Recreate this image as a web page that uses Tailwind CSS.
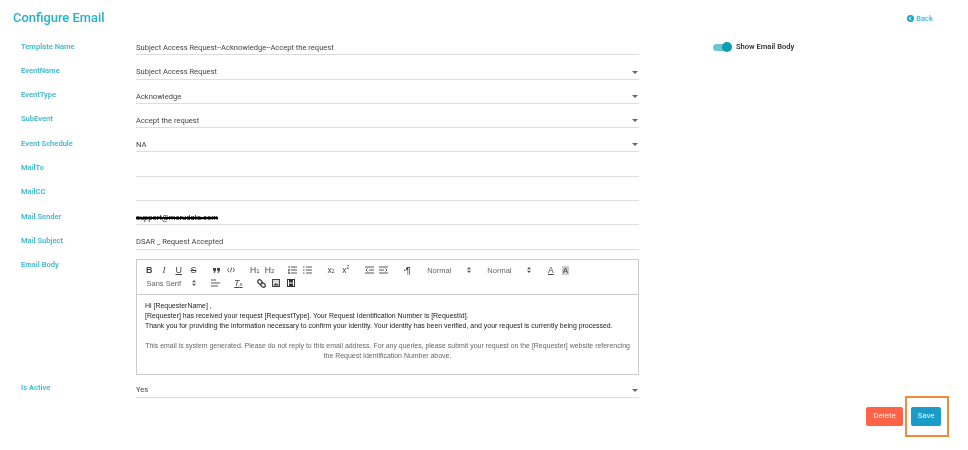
<!DOCTYPE html>
<html lang="en">
<head>
  <meta charset="UTF-8" />
  <title>Configure Email</title>
  <script src="https://cdn.jsdelivr.net/npm/@tailwindcss/browser@4"></script>
</head>
<body class="bg-white w-[968px] h-[450px] overflow-hidden relative blur-[0.25px] font-['Roboto',sans-serif] text-[7.55px] text-[#444]">
  <!-- Header -->
  <header class="flex justify-between items-center h-[31px] pt-[5px] pl-[13px] pr-[35px]">
    <h1 class="text-[12.9px] font-medium text-[#22b3c8]">Configure Email</h1>
    <a class="flex items-center gap-[2px] text-[#3fb9cf] font-medium pt-[1px]">
      <svg width="7" height="7" viewBox="0 0 10 10"><circle cx="5" cy="5" r="5" fill="#17a5c6"/><path d="M5.800 2.600 3.400 5l2.400 2.400" fill="none" stroke="#fff" stroke-width="1.500"/></svg>
      Back
    </a>
  </header>

  <main class="flex">
    <!-- Form -->
    <div class="w-[639px] pl-[21px]">
      <div class="flex h-[24.3px]">
        <label class="w-[115px] pt-[9.5px] font-semibold text-[#3fb9cf]">Template Name</label>
        <div class="flex-1 border-b border-[#ddd] flex items-end pb-[1px]">Subject Access Request--Acknowledge--Accept the request</div>
      </div>
      <div class="flex h-[24.3px]">
        <label class="w-[115px] pt-[9.5px] font-semibold text-[#3fb9cf]">EventName</label>
        <div class="flex-1 border-b border-[#ddd] flex items-end justify-between pb-[1px] pr-[1px]">Subject Access Request
          <svg class="mb-[4px]" width="6" height="3" viewBox="0 0 6 3"><path d="M0 0h6L3 3z" fill="#666"/></svg></div>
      </div>
      <div class="flex h-[24.3px]">
        <label class="w-[115px] pt-[9.5px] font-semibold text-[#3fb9cf]">EventType</label>
        <div class="flex-1 border-b border-[#ddd] flex items-end justify-between pb-[1px] pr-[1px]">Acknowledge
          <svg class="mb-[4px]" width="6" height="3" viewBox="0 0 6 3"><path d="M0 0h6L3 3z" fill="#666"/></svg></div>
      </div>
      <div class="flex h-[24.3px]">
        <label class="w-[115px] pt-[9.5px] font-semibold text-[#3fb9cf]">SubEvent</label>
        <div class="flex-1 border-b border-[#ddd] flex items-end justify-between pb-[1px] pr-[1px]">Accept the request
          <svg class="mb-[4px]" width="6" height="3" viewBox="0 0 6 3"><path d="M0 0h6L3 3z" fill="#666"/></svg></div>
      </div>
      <div class="flex h-[24.3px]">
        <label class="w-[115px] pt-[9.5px] font-semibold text-[#3fb9cf]">Event Schedule</label>
        <div class="flex-1 border-b border-[#ddd] flex items-end justify-between pb-[1px] pr-[1px]">NA
          <svg class="mb-[4px]" width="6" height="3" viewBox="0 0 6 3"><path d="M0 0h6L3 3z" fill="#666"/></svg></div>
      </div>
      <div class="flex h-[24.3px]">
        <label class="w-[115px] pt-[9.5px] font-semibold text-[#3fb9cf]">MailTo</label>
        <div class="flex-1 border-b border-[#ddd]"></div>
      </div>
      <div class="flex h-[24.3px]">
        <label class="w-[115px] pt-[9.5px] font-semibold text-[#3fb9cf]">MailCC</label>
        <div class="flex-1 border-b border-[#ddd]"></div>
      </div>
      <div class="flex h-[24.3px]">
        <label class="w-[115px] pt-[9.5px] font-semibold text-[#3fb9cf]">Mail Sender</label>
        <div class="flex-1 border-b border-[#ddd] flex items-end pb-[1px] text-black line-through decoration-2 decoration-black">support@merudata.com</div>
      </div>
      <div class="flex h-[24.3px]">
        <label class="w-[115px] pt-[9.5px] font-semibold text-[#3fb9cf]">Mail Subject</label>
        <div class="flex-1 border-b border-[#ddd] flex items-end pb-[1px]">DSAR _ Request Accepted</div>
      </div>

      <!-- Email body editor -->
      <div class="flex mt-[9px]">
        <label class="w-[115px] font-semibold text-[#3fb9cf]">Email Body</label>
        <div class="flex-1 border border-[#ccc] h-[116px] flex flex-col">
          <div class="flex flex-wrap items-center gap-x-[8.7px] px-[5px] py-[4px] h-[35px] border-b border-[#ccc] content-start text-[#444] font-['Liberation_Sans',sans-serif]">
            <div class="flex">
              <button class="w-[14.7px] h-[13px] text-[9px] font-bold">B</button>
              <button class="w-[14.7px] h-[13px] text-[9px] italic font-['Liberation_Serif',serif]">I</button>
              <button class="w-[14.7px] h-[13px] text-[9px] underline">U</button>
              <button class="w-[14.7px] h-[13px] text-[9px] line-through">S</button>
            </div>
            <div class="flex">
              <button class="w-[14.7px] h-[13px] flex items-center justify-center">
                <svg width="7" height="5" viewBox="0 0 7 5" fill="#444"><path d="M0 0h3v2.500L1.500 5H.5l1-2.200H0zM4 0h3v2.500L5.500 5h-1l1-2.200H4z"/></svg>
              </button>
              <button class="w-[14.7px] h-[13px] flex items-center justify-center">
                <svg width="8" height="6" viewBox="0 0 8 6" fill="none" stroke="#444" stroke-width=".8"><path d="M2 1 .5 3 2 5M6 1l1.500 2L6 5M4.700.5 3.300 5.500"/></svg>
              </button>
            </div>
            <div class="flex">
              <button class="w-[14.7px] h-[13px] text-[8.5px] font-medium">H<span class="text-[6px]">1</span></button>
              <button class="w-[14.7px] h-[13px] text-[8.5px] font-medium">H<span class="text-[6px]">2</span></button>
            </div>
            <div class="flex">
              <button class="w-[14.7px] h-[13px] flex items-center justify-center">
                <svg width="9" height="8" viewBox="0 0 9 8" stroke="#444" stroke-width=".9" fill="none"><path d="M3 1h6M3 4h6M3 7h6M1 0v2M.3 3.500h1.400L.3 5h1.400M.3 6.500h1.400v1H.3"/></svg>
              </button>
              <button class="w-[14.7px] h-[13px] flex items-center justify-center">
                <svg width="9" height="8" viewBox="0 0 9 8" stroke="#444" stroke-width=".9"><path d="M3 1h6M3 4h6M3 7h6M0 1h1.500M0 4h1.500M0 7h1.500"/></svg>
              </button>
            </div>
            <div class="flex">
              <button class="w-[14.7px] h-[13px] text-[8.5px]">x<span class="text-[5px]">2</span></button>
              <button class="w-[14.7px] h-[13px] text-[8.5px]">x<span class="text-[5px] align-super">2</span></button>
            </div>
            <div class="flex">
              <button class="w-[14.7px] h-[13px] flex items-center justify-center">
                <svg width="9" height="8" viewBox="0 0 9 8" stroke="#444" stroke-width=".9" fill="none"><path d="M0 1h9M4 4h5M0 7h9"/><path d="M2.500 2.500 1 4l1.500 1.500"/></svg>
              </button>
              <button class="w-[14.7px] h-[13px] flex items-center justify-center">
                <svg width="9" height="8" viewBox="0 0 9 8" stroke="#444" stroke-width=".9" fill="none"><path d="M0 1h9M0 4h5M0 7h9"/><path d="M6.500 2.500 8 4 6.500 5.500"/></svg>
              </button>
            </div>
            <div class="flex">
              <button class="w-[14.7px] h-[13px] text-[8.5px] font-bold">
                <span class="text-[6px] align-middle">•</span>¶
              </button>
            </div>
            <div class="flex w-[51.5px] h-[13px] items-center justify-between pl-[4px] pr-[4px] text-[7.5px] text-[#666]">
              Normal
              <svg width="4" height="6" viewBox="0 0 4 6" fill="#555"><path d="M0 2.300 2 0l2 2.300zM0 3.700h4L2 6z"/></svg>
            </div>
            <div class="flex w-[51.5px] h-[13px] items-center justify-between pl-[4px] pr-[4px] text-[7.5px] text-[#666]">
              Normal
              <svg width="4" height="6" viewBox="0 0 4 6" fill="#555"><path d="M0 2.300 2 0l2 2.300zM0 3.700h4L2 6z"/></svg>
            </div>
            <div class="flex">
              <button class="w-[14.7px] h-[13px] text-[8.5px] underline">A</button>
              <button class="w-[14.7px] h-[13px] text-[8px] flex items-center justify-center"><span class="bg-[#ccc] px-[1px] leading-[9px]">A</span></button>
            </div>
            <div class="flex w-[57px] h-[13px] items-center justify-between pl-[4.5px] pr-[3px] text-[7.5px] text-[#666]">
              Sans Serif
              <svg width="4" height="6" viewBox="0 0 4 6" fill="#555"><path d="M0 2.300 2 0l2 2.300zM0 3.700h4L2 6z"/></svg>
            </div>
            <div class="flex">
              <button class="w-[14.7px] h-[13px] flex items-center justify-center">
                <svg width="9" height="8" viewBox="0 0 9 8" stroke="#444" stroke-width=".9"><path d="M0 1h5M0 4h9M0 7h7"/></svg>
              </button>
            </div>
            <div class="flex">
              <button class="w-[14.7px] h-[13px] text-[8.5px] italic font-medium underline">T<span class="text-[6px]">x</span></button>
            </div>
            <div class="flex">
              <button class="w-[14.7px] h-[13px] flex items-center justify-center">
                <svg width="9" height="9" viewBox="0 0 9 9" fill="none" stroke="#444" stroke-width="1.300"><path d="M1 3.500a1.800 1.800 0 0 1 2.500-2.500l1.500 1.500a1.800 1.800 0 0 1-2.500 2.500zM4 6.500a1.800 1.800 0 0 1 2.500-2.500L8 5.500a1.800 1.800 0 0 1-2.500 2.500z"/></svg>
              </button>
              <button class="w-[14.7px] h-[13px] flex items-center justify-center">
                <svg width="8" height="8" viewBox="0 0 8 8"><rect x=".5" y=".5" width="7" height="7" fill="#ddd" stroke="#444"/><path d="M1.500 6.500 3.500 4l1.500 1.500 1-1 .5 2z" fill="#444"/></svg>
              </button>
              <button class="w-[14.7px] h-[13px] flex items-center justify-center">
                <svg width="8" height="8" viewBox="0 0 8 8"><rect x=".5" y=".5" width="7" height="7" fill="#fff" stroke="#333"/><path d="M2 0h4v3.500H2zM2 4.500h4V8H2z" fill="#333"/></svg>
              </button>
            </div>
          </div>
          <div class="flex-1 px-[8px] pt-[6px] text-[6.95px] leading-[10.2px] text-[#222] font-['Liberation_Sans',sans-serif]">
            <p>Hi [RequesterName] ,</p>
            <p>[Requester] has received your request [RequestType]. Your Request Identification Number is [RequestId].</p>
            <p>Thank you for providing the information necessary to confirm your identity. Your identity has been verified, and your request is currently being processed.</p>
            <p class="text-center text-[#666] mt-[9.5px]">This email is system generated. Please do not reply to this email address. For any queries, please submit your request on the [Requester] website referencing the Request Identification Number above.</p>
          </div>
        </div>
      </div>

      <div class="flex h-[23px]">
        <label class="w-[115px] pt-[7.5px] font-semibold text-[#3fb9cf]">Is Active</label>
        <div class="flex-1 border-b border-[#ddd] flex items-end justify-between pb-[1px] pr-[1px]">Yes
          <svg class="mb-[4px]" width="6" height="3" viewBox="0 0 6 3"><path d="M0 0h6L3 3z" fill="#666"/></svg></div>
      </div>
    </div>

    <!-- Toggle -->
    <div class="pl-[74px] pt-[11px] flex items-start gap-[4px]">
      <div class="relative w-[19px] h-[10px]">
        <div class="absolute left-0 right-[2px] top-[1.5px] h-[7px] rounded-full bg-[#6cc5cf]"></div>
        <div class="absolute right-0 top-0 w-[10px] h-[10px] rounded-full bg-[#0a9cb0]"></div>
      </div>
      <span class="font-semibold text-[#333] leading-[10px]">Show Email Body</span>
    </div>
  </main>

  <!-- Actions -->
  <div class="flex justify-end gap-[8px] pr-[27px] mt-[9px]">
    <button class="w-[37px] h-[19px] rounded-[2px] bg-[#ff6347] text-white/90 text-[8px]">Delete</button>
    <button class="w-[30px] h-[19px] rounded-[2px] bg-[#1a9cc9] text-white/90 text-[8px]">Save</button>
  </div>

  <!-- Screenshot annotation -->
  <div class="absolute left-[905px] top-[396px] w-[44px] h-[41px] border-2 border-[#f28a3c]"></div>
</body>
</html>
